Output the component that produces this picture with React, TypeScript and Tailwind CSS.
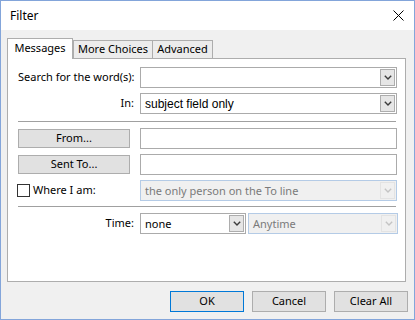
import React from 'react';

const UI = "font-['Noto_Sans',sans-serif]";
const ARIAL = "font-['Liberation_Sans',Arial,sans-serif]";

function Chevron({ disabled }: { disabled?: boolean }) {
    return (
        <svg width="8" height="5" viewBox="0 0 8 5">
            <path
                d="M0.8 0.8L4 4L7.2 0.8"
                fill="none"
                stroke={disabled ? '#c4c4c4' : '#3c3c3c'}
                strokeWidth="1.4"
            />
        </svg>
    );
}

function DropBtn({ disabled }: { disabled?: boolean }) {
    return (
        <div
            className={`flex h-[17px] w-[15px] items-center justify-center border ${
                disabled ? 'border-[#e3e3e3] bg-[#f0f0f0]' : 'border-[#adadad] bg-[#e6e6e6]'
            }`}
        >
            <Chevron disabled={disabled} />
        </div>
    );
}

function Combo({
    value,
    width,
    disabled,
    font = UI,
}: {
    value?: string;
    width: string;
    disabled?: boolean;
    font?: string;
}) {
    return (
        <div
            className={`flex h-[21px] items-center justify-between border pl-[4px] pr-[1px] ${width} ${
                disabled ? 'border-[#b4cbe6] bg-[#f0f0f0] text-[#7a7a7a]' : 'border-[#ababab] bg-white text-black'
            }`}
        >
            <span className={`${font} whitespace-nowrap leading-none ${font === ARIAL ? 'text-[12px]' : 'text-[11px]'}`}>
                {value}
            </span>
            <DropBtn disabled={disabled} />
        </div>
    );
}

function TextField() {
    return <div className="h-[21px] w-[257px] border border-[#ababab] bg-white" />;
}

function Button({ label, width, primary }: { label: string; width: string; primary?: boolean }) {
    return (
        <button
            type="button"
            className={`flex items-center justify-center border bg-[#e1e1e1] text-[11px] text-black ${width} ${
                primary ? 'border-[#0078d7]' : 'border-[#adadad]'
            }`}
        >
            {label}
        </button>
    );
}

function Separator() {
    return <div className="h-px w-[378px] bg-[#a0a0a0]" />;
}

function Label({ children }: { children: React.ReactNode }) {
    return (
        <div className="w-[122px] whitespace-nowrap pr-[6px] text-right text-[11px] text-black">{children}</div>
    );
}

export default function App() {
    return (
        <div className={`${UI} flex h-[320px] w-[415px] flex-col border border-[#83a5da] bg-[#f0f0f0]`}>
            <div className="flex h-[29px] items-center justify-between bg-white pl-[9px] pr-[10px]">
                <span className="text-[12px] text-black">Filter</span>
                <svg width="11" height="11" viewBox="0 0 11 11">
                    <path d="M0.5 0.5L10.5 10.5M10.5 0.5L0.5 10.5" stroke="#000" strokeWidth="1" />
                </svg>
            </div>

            <div className="ml-[6px] mt-[8px] flex items-end">
                <div className="relative z-10 -mb-px flex h-[21px] w-[66px] items-center justify-center border-x border-t border-[#adadad] bg-white pb-[2px] text-[11px] text-black">
                    Messages
                </div>
                <div className="flex h-[18px] w-[80px] items-center justify-center border-x border-t border-[#adadad] bg-[#ececec] text-[11px] text-black">
                    More Choices
                </div>
                <div className="-ml-px flex h-[18px] w-[61px] items-center justify-center border-x border-t border-[#adadad] bg-[#ececec] text-[11px] text-black">
                    Advanced
                </div>
            </div>

            <div className="ml-[6px] flex h-[224px] w-[399px] flex-col border border-[#adadad] bg-white pl-[10px] pt-[8px]">
                <div className="flex h-[21px] items-center">
                    <Label>Search for the word(s):</Label>
                    <Combo width="w-[257px]" />
                </div>
                <div className="mt-[5px] flex h-[21px] items-center">
                    <Label>In:</Label>
                    <Combo width="w-[257px]" value="subject field only" font={ARIAL} />
                </div>
                <div className="mt-[7px]">
                    <Separator />
                </div>
                <div className="mt-[6px] flex h-[21px] items-center">
                    <Button label="From..." width="h-[19px] w-[112px]" />
                    <div className="ml-[10px]">
                        <TextField />
                    </div>
                </div>
                <div className="mt-[5px] flex h-[21px] items-center">
                    <Button label="Sent To..." width="h-[19px] w-[112px]" />
                    <div className="ml-[10px]">
                        <TextField />
                    </div>
                </div>
                <div className="mt-[5px] flex h-[21px] items-center">
                    <div className="flex w-[122px] items-center">
                        <div className="-ml-px h-[13px] w-[13px] border border-[#333] bg-white" />
                        <span className="ml-[3px] whitespace-nowrap text-[11px] text-black">Where I am:</span>
                    </div>
                    <Combo width="w-[257px]" value="the only person on the To line" disabled />
                </div>
                <div className="mt-[5px]">
                    <Separator />
                </div>
                <div className="mt-[6px] flex h-[21px] items-center">
                    <Label>Time:</Label>
                    <Combo width="w-[106px]" value="none" />
                    <div className="ml-[2px]">
                        <Combo width="w-[150px]" value="Anytime" disabled />
                    </div>
                </div>
            </div>

            <div className="mt-[9px] flex justify-end gap-[8px] pr-[6px]">
                <Button label="OK" width="h-[21px] w-[74px]" primary />
                <Button label="Cancel" width="h-[21px] w-[74px]" />
                <Button label="Clear All" width="h-[21px] w-[74px]" />
            </div>
        </div>
    );
}
